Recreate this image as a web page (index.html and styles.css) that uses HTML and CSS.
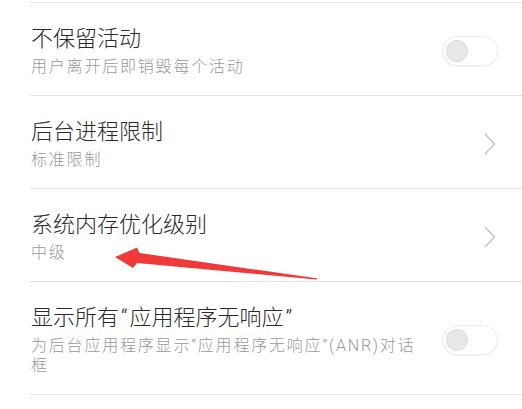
FILE: index.html
```html
<!DOCTYPE html>
<html lang="zh-CN">
<head>
<meta charset="utf-8">
<link rel="stylesheet" href="styles.css">
</head>
<body>
<div class="page">
  <ul class="list">
    <li class="row">
      <div class="text">
        <div class="title">不保留活动</div>
        <div class="sub">用户离开后即销毁每个活动</div>
      </div>
      <span class="toggle"><span class="knob"></span></span>
    </li>
    <li class="row">
      <div class="text">
        <div class="title">后台进程限制</div>
        <div class="sub">标准限制</div>
      </div>
      <svg class="chev" width="12" height="22" viewBox="0 0 12 22"><path d="M1 1 L10.5 11 L1 21" fill="none" stroke="#c2c2c2" stroke-width="1.4"/></svg>
    </li>
    <li class="row">
      <div class="text">
        <div class="title">系统内存优化级别</div>
        <div class="sub">中级</div>
      </div>
      <svg class="chev" width="12" height="22" viewBox="0 0 12 22"><path d="M1 1 L10.5 11 L1 21" fill="none" stroke="#c2c2c2" stroke-width="1.4"/></svg>
    </li>
    <li class="row">
      <div class="text">
        <div class="title">显示所有<span class="q">“</span>应用程序无响应<span class="q">”</span></div>
        <div class="sub">为后台应用程序显示“应用程序无响应”(ANR)对话框</div>
      </div>
      <span class="toggle"><span class="knob"></span></span>
    </li>
  </ul>
  <svg class="arrow" width="522" height="409" viewBox="0 0 522 409">
    <polygon points="115,257 137,247.5 139.5,253 318,278.5 316,279.5 137,263 133,268" fill="#f03a3a"/>
  </svg>
</div>
</body>
</html>
```
FILE: styles.css
```css
* { box-sizing: border-box; }
html, body {
  margin: 0;
  padding: 0;
  background: #ffffff;
}
body {
  font-family: Roboto, "Noto Sans CJK SC", sans-serif;
  width: 522px;
  height: 409px;
  overflow: hidden;
}
.page {
  position: relative;
  padding-top: 2px;
}
.list {
  list-style: none;
  margin: 0 0 0 30px;
  padding: 0;
  border-top: 1px solid #e4e4e4;
}
.row {
  display: flex;
  align-items: center;
  padding: 22px 24px 18px 1px;
  border-bottom: 1px solid #e4e4e4;
}
.text {
  flex: 0 0 392px;
  width: 392px;
}
.title {
  font-size: 22px;
  line-height: 28px;
  font-weight: 300;
  color: #2a2a2a;
  margin-bottom: 4px;
}
.q {
  margin: 0 2px;
}
.sub {
  font-size: 16px;
  line-height: 20px;
  font-weight: 300;
  letter-spacing: 1.8px;
  color: #989898;
}
.toggle {
  margin-left: auto;
  width: 56px;
  height: 30px;
  border-radius: 15px;
  border: 1.5px solid #ececec;
  box-shadow: 0 1px 1px rgba(0,0,0,0.06);
  background: #fff;
  display: flex;
  align-items: center;
  padding-left: 3px;
}
.knob {
  width: 22px;
  height: 22px;
  border-radius: 50%;
  background: #e8e8e8;
  border: 1px solid #dadada;
}
.chev {
  margin-left: auto;
  margin-right: 2px;
}
.arrow {
  position: absolute;
  left: 0;
  top: 0;
  pointer-events: none;
}
```
